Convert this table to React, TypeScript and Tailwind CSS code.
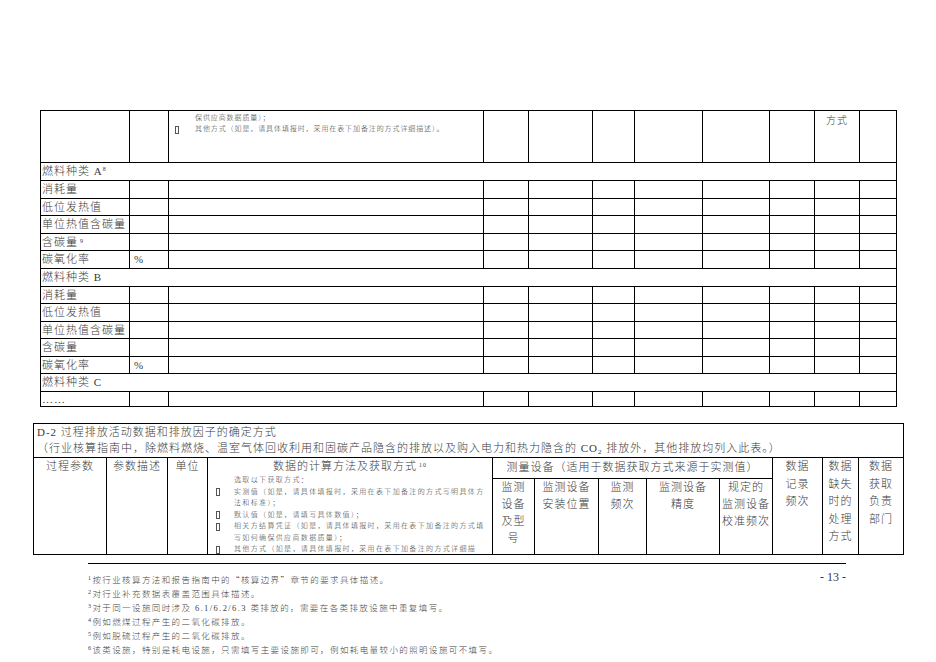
const font = "font-['Liberation_Serif','Noto_Sans_CJK_SC',serif]";
const cjk = "font-['Noto_Sans_CJK_SC',sans-serif]";

const topCols = [
  "w-[89px]",
  "w-[39px]",
  "w-[315px]",
  "w-[45px]",
  "w-[64px]",
  "w-[42px]",
  "w-[68px]",
  "w-[67px]",
  "w-[45px]",
  "w-[45px]",
  "w-[36px]",
];

interface FuelRow {
  label: string;
  sup?: string;
  unit?: string;
  span?: boolean;
  h: string;
}

const fuelRows: FuelRow[] = [
  { label: "燃料种类 A", sup: "8", span: true, h: "h-[18px]" },
  { label: "消耗量", h: "h-[18px]" },
  { label: "低位发热值", h: "h-[17px]" },
  { label: "单位热值含碳量", h: "h-[18px]" },
  { label: "含碳量", sup: "9", h: "h-[17px]" },
  { label: "碳氧化率", unit: "%", h: "h-[18px]" },
  { label: "燃料种类 B", span: true, h: "h-[18px]" },
  { label: "消耗量", h: "h-[17px]" },
  { label: "低位发热值", h: "h-[18px]" },
  { label: "单位热值含碳量", h: "h-[17px]" },
  { label: "含碳量", h: "h-[18px]" },
  { label: "碳氧化率", unit: "%", h: "h-[17px]" },
  { label: "燃料种类 C", span: true, h: "h-[18px]" },
  { label: "……", h: "h-[15px]" },
];

const methodLines: { box: boolean; text: string }[] = [
  { box: false, text: "选取以下获取方式：" },
  { box: true, text: "实测值（如是，请具体填报时，采用在表下加备注的方式写明具体方" },
  { box: false, text: "法和标准）；" },
  { box: true, text: "默认值（如是，请填写具体数值）；" },
  { box: true, text: "相关方结算凭证（如是，请具体填报时，采用在表下加备注的方式填" },
  { box: false, text: "写如何确保供应商数据质量）；" },
  { box: true, text: "其他方式（如是，请具体填报时，采用在表下加备注的方式详细描" },
];

const footnotes: [string, React.ReactNode][] = [
  [
    "1",
    <>
      按行业核算方法和报告指南中的<span className={cjk}>“</span>核算边界
      <span className={cjk}>”</span>章节的要求具体描述。
    </>,
  ],
  ["2", "对行业补充数据表覆盖范围具体描述。"],
  ["3", "对于同一设施同时涉及 6.1/6.2/6.3 类排放的，需要在各类排放设施中重复填写。"],
  ["4", "例如燃煤过程产生的二氧化碳排放。"],
  ["5", "例如脱硫过程产生的二氧化碳排放。"],
  ["6", "该类设施，特别是耗电设施，只需填写主要设施即可，例如耗电量较小的照明设施可不填写。"],
];

function Box() {
  return <span className="inline-block h-[8px] w-[4px] border border-[#555]" />;
}

function TopTable() {
  return (
    <div className="ml-[40px] w-[857px] border-l border-r border-t border-black">
      {/* carried-over first row */}
      <div className="flex h-[52px] border-b border-black">
        {topCols.map((w, i) => (
          <div
            key={i}
            className={`${w} shrink-0 ${i < topCols.length - 1 ? "border-r border-black" : ""}`}
          >
            {i === 2 && (
              <div className="pt-[2px] text-[7px] leading-[11px] tracking-[0.9px] whitespace-nowrap">
                <div className="pl-[26px]">保供应商数据质量）；</div>
                <div className="flex items-center pl-[6px]">
                  <Box />
                  <span className="ml-[16px]">
                    其他方式（如是，请具体填报时，采用在表下加备注的方式详细描述）。
                  </span>
                </div>
              </div>
            )}
            {i === 9 && (
              <div className="pt-[4px] text-center text-[10px] leading-[12px] tracking-[1px]">
                方式
              </div>
            )}
          </div>
        ))}
      </div>
      {fuelRows.map((r, ri) => (
        <div key={ri} className={`flex ${r.h} border-b border-black`}>
          {r.span ? (
            <div className="flex items-center pl-[1px] text-[11px] tracking-[1px] whitespace-nowrap">
              {r.label}
              {r.sup && <sup className="text-[6px]">{r.sup}</sup>}
            </div>
          ) : (
            topCols.map((w, i) => (
              <div
                key={i}
                className={`${w} flex shrink-0 items-center ${i < topCols.length - 1 ? "border-r border-black" : ""}`}
              >
                {i === 0 && (
                  <span className="pl-[1px] text-[11px] tracking-[1px] whitespace-nowrap">
                    {r.label}
                    {r.sup && <sup className="ml-[2px] text-[6px]">{r.sup}</sup>}
                  </span>
                )}
                {i === 1 && r.unit && <span className="pl-[4px] text-[11px]">{r.unit}</span>}
              </div>
            ))
          )}
        </div>
      ))}
    </div>
  );
}

function Head({ w, lines, last }: { w: string; lines: string[]; last?: boolean }) {
  return (
    <div
      className={`${w} shrink-0 text-center text-[11px] leading-[17.5px] tracking-[1px] ${last ? "" : "border-r border-black"}`}
    >
      {lines.map((l, i) => (
        <div key={i}>{l}</div>
      ))}
    </div>
  );
}

function SubHead({ w, lines, last }: { w: string; lines: string[]; last?: boolean }) {
  return (
    <div
      className={`${w} shrink-0 text-center text-[11px] leading-[17px] tracking-[1px] ${last ? "" : "border-r border-black"}`}
    >
      {lines.map((l, i) => (
        <div key={i}>{l}</div>
      ))}
    </div>
  );
}

function ProcessTable() {
  return (
    <div className="mt-[16px] ml-[33px] w-[871px] border border-black">
      <div className="h-[34px] border-b border-black pl-[3px] text-[11px] leading-[16px] tracking-[1px] whitespace-nowrap">
        <div>D-2 过程排放活动数据和排放因子的确定方式</div>
        <div>
          （行业核算指南中，除燃料燃烧、温室气体回收利用和固碳产品隐含的排放以及购入电力和热力隐含的 CO
          <sub className="text-[7px]">2</sub> 排放外，其他排放均列入此表。）
        </div>
      </div>
      <div className="flex h-[96px]">
        <Head w="w-[73px]" lines={["过程参数"]} />
        <Head w="w-[61px]" lines={["参数描述"]} />
        <Head w="w-[40px]" lines={["单位"]} />
        <div className="w-[285px] shrink-0 overflow-hidden border-r border-black">
          <div className="text-center text-[11px] leading-[17px] tracking-[1px]">
            数据的计算方法及获取方式
            <sup className="ml-[2px] text-[6px]">10</sup>
          </div>
          <div className="text-[7px] leading-[11.5px] tracking-[1.35px] whitespace-nowrap">
            {methodLines.map((m, i) => (
              <div key={i} className="flex items-center pl-[8px]">
                <span className="flex w-[18px] shrink-0 items-center">{m.box && <Box />}</span>
                <span>{m.text}</span>
              </div>
            ))}
          </div>
        </div>
        <div className="flex w-[280px] shrink-0 flex-col border-r border-black">
          <div className="h-[21px] border-b border-black pt-[1px] text-center text-[11px] leading-[17px] tracking-[1px] whitespace-nowrap">
            测量设备（适用于数据获取方式来源于实测值）
          </div>
          <div className="flex flex-1">
            <SubHead w="w-[42px]" lines={["监测", "设备", "及型", "号"]} />
            <SubHead w="w-[64px]" lines={["监测设备", "安装位置"]} />
            <SubHead w="w-[48px]" lines={["监测", "频次"]} />
            <SubHead w="w-[73px]" lines={["监测设备", "精度"]} />
            <SubHead w="w-[52px]" lines={["规定的", "监测设备", "校准频次"]} last />
          </div>
        </div>
        <Head w="w-[50px]" lines={["数据", "记录", "频次"]} />
        <Head w="w-[36px]" lines={["数据", "缺失", "时的", "处理", "方式"]} />
        <Head w="w-[44px]" lines={["数据", "获取", "负责", "部门"]} last />
      </div>
    </div>
  );
}

function Footnotes() {
  return (
    <div className="mt-[8px] ml-[88px] flex w-[758px] justify-between border-t border-black">
      <div className="pt-[8px] text-[8.5px] leading-[14px] tracking-[1.4px] text-[#444] whitespace-nowrap">
        {footnotes.map(([n, t]) => (
          <div key={n}>
            <sup className="text-[6px]">{n}</sup>
            {t}
          </div>
        ))}
      </div>
      <div className="pt-[6px] text-[12px] leading-[14px]">- 13 -</div>
    </div>
  );
}

export default function App() {
  return (
    <div
      className={`h-[662px] w-[936px] overflow-hidden bg-white pt-[110px] font-light text-[#3a3a3a] ${font}`}
    >
      <TopTable />
      <ProcessTable />
      <Footnotes />
    </div>
  );
}
